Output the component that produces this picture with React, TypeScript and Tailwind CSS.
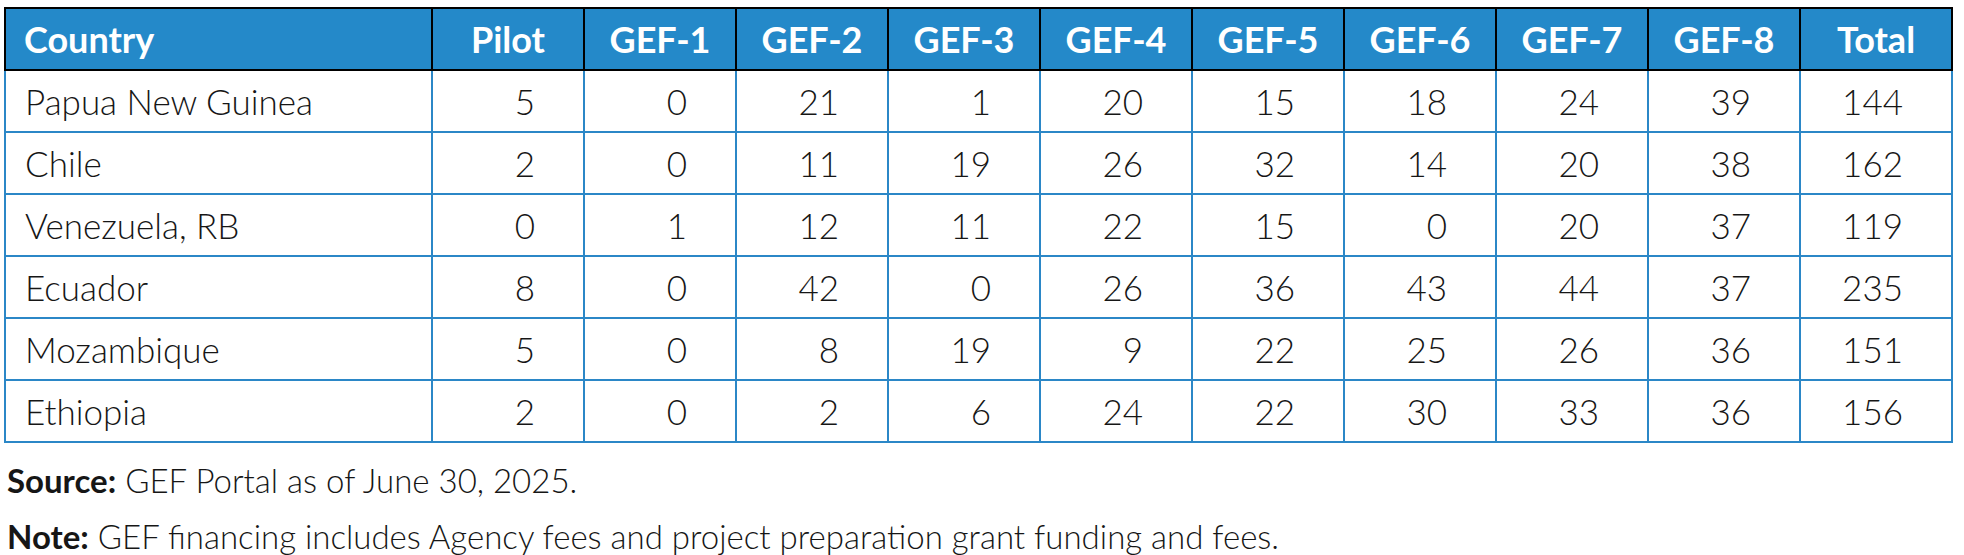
const columns = ["Pilot", "GEF-1", "GEF-2", "GEF-3", "GEF-4", "GEF-5", "GEF-6", "GEF-7", "GEF-8", "Total"];

const rows: { country: string; values: number[] }[] = [
  { country: "Papua New Guinea", values: [5, 0, 21, 1, 20, 15, 18, 24, 39, 144] },
  { country: "Chile", values: [2, 0, 11, 19, 26, 32, 14, 20, 38, 162] },
  { country: "Venezuela, RB", values: [0, 1, 12, 11, 22, 15, 0, 20, 37, 119] },
  { country: "Ecuador", values: [8, 0, 42, 0, 26, 36, 43, 44, 37, 235] },
  { country: "Mozambique", values: [5, 0, 8, 19, 9, 22, 25, 26, 36, 151] },
  { country: "Ethiopia", values: [2, 0, 2, 6, 24, 22, 30, 33, 36, 156] },
];

export default function App() {
  return (
    <div className="w-[1964px] h-[555px] bg-white pl-[4px] pt-[7px] text-[#161616] font-['Lato',_'Liberation_Sans',_sans-serif]">
      <table className="table-fixed border-collapse w-[1947px]">
        <colgroup>
          <col className="w-[427px]" />
          {columns.map((c) => (
            <col key={c} className="w-[152px]" />
          ))}
        </colgroup>
        <thead>
          <tr className="h-[62px] bg-[#2489c9]">
            <th className="border-2 border-black text-left pl-[18px] text-[36px] leading-none font-bold text-white">
              Country
            </th>
            {columns.map((c) => (
              <th key={c} className="border-2 border-black text-center text-[36px] leading-none font-bold text-white">
                {c}
              </th>
            ))}
          </tr>
        </thead>
        <tbody>
          {rows.map((r) => (
            <tr key={r.country} className="h-[62px]">
              <td className="border-2 border-[#2b87c7] pl-[19px] text-[35px] leading-none font-light">{r.country}</td>
              {r.values.map((v, i) => (
                <td key={i} className="border-2 border-[#2b87c7] text-right pr-[48px] text-[35px] leading-none font-light">
                  {v}
                </td>
              ))}
            </tr>
          ))}
        </tbody>
      </table>

      {/* source + note */}
      <div className="mt-[9px] pl-[3px] text-[33px] font-light leading-[56px]">
        <p>
          <span className="font-bold">Source:</span> GEF Portal as of June 30, 2025.
        </p>
        <p>
          <span className="font-bold">Note:</span> GEF financing includes Agency fees and project preparation grant funding and fees.
        </p>
      </div>
    </div>
  );
}
